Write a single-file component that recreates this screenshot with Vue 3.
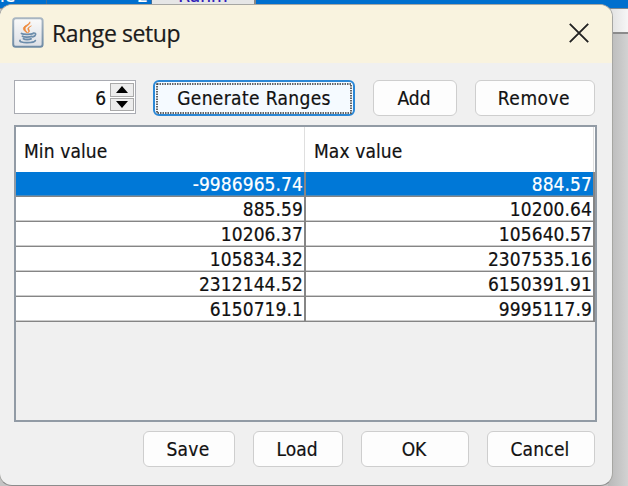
<script setup>
import { ref } from 'vue'

const count = ref(6)
const selected = ref(0)
const rows = [
  ['-9986965.74', '884.57'],
  ['885.59', '10200.64'],
  ['10206.37', '105640.57'],
  ['105834.32', '2307535.16'],
  ['2312144.52', '6150391.91'],
  ['6150719.1', '9995117.9'],
]
</script>

<template>
  <div class="desktop">
    <div class="backdrop">
      <div class="back-cell first"><span>le</span></div>
      <div class="back-cell second"><span>2</span></div>
      <div class="back-button"><span>Rahm</span></div>
    </div>
    <div class="side"><div class="side-head"></div></div>

    <section class="dialog">
      <header class="titlebar">
        <svg class="java" width="32" height="32" viewBox="0 0 32 32">
          <defs>
            <linearGradient id="tile" x1="0" y1="0" x2="0" y2="1">
              <stop offset="0" stop-color="#fafafa" />
              <stop offset="1" stop-color="#dcdfe5" />
            </linearGradient>
            <linearGradient id="edge" x1="0" y1="0" x2="0" y2="1">
              <stop offset="0" stop-color="#a9b6c2" />
              <stop offset="1" stop-color="#6f8ba5" />
            </linearGradient>
          </defs>
          <rect x="1.2" y="1.2" width="29.4" height="28.6" rx="2.5" fill="url(#tile)" stroke="url(#edge)" stroke-width="2" />
          <path d="M17.800 4.800c1.400 3-5 4.300-4.700 7.200.1 1.600 1.700 2.700 2.500 4-2.500-1.200-4.600-2.700-4.200-4.900.5-2.700 6.200-3.500 6.400-6.300z" fill="#ee8a3c" stroke="#ee8a3c" stroke-width=".7" />
          <path d="M19.500 8.800c-2.100 1-4 1.700-3.800 3.200.1 1.300 1.500 1.900.5 3.800 2-1.200 1.500-2.400.8-3.400-.9-1.300.6-2.400 2.500-3.600z" fill="#ee8a3c" stroke="#ee8a3c" stroke-width=".5" />
          <g fill="none" stroke="#6b8cab" stroke-linecap="round">
            <path d="M9.500 16.500c1.500 1 9 1.200 11.500.2" stroke-width="1.800" />
            <path d="M10.500 19.300c1.500 1.100 7 1.100 9.400.1M11.500 21.700c1.500 1 5.500 1 7.500.1" stroke-width="1.900" />
            <path d="M21.500 16c3.400-.4 2.500 3.200-.8 3.900" stroke-width="1.600" />
            <path d="M8 23.400c-1.500 2.800 14 3 15.300.2" stroke-width="1.800" />
          </g>
        </svg>
        <h1>Range setup</h1>
        <svg class="close" width="20" height="20" viewBox="0 0 20 20">
          <path d="M.8.800 19.200 19.200M19.200.800.800 19.200" fill="none" stroke="#222" stroke-width="1.900" />
        </svg>
      </header>

      <div class="toolbar">
        <div class="spinner">
          <span class="num">{{ count }}</span>
          <div class="steps">
            <button @click="count++"><svg width="12" height="7" viewBox="0 0 12 7"><path d="M0 7 6 0 12 7z" /></svg></button>
            <button @click="count--"><svg width="12" height="7" viewBox="0 0 12 7"><path d="M0 0 6 7 12 0z" /></svg></button>
          </div>
        </div>
        <button class="btn generate">
          <svg class="focus" width="196" height="31"><rect x="1" y="1" width="194" height="29" /></svg>
          <span>Generate Ranges</span>
        </button>
        <button class="btn add"><span>Add</span></button>
        <button class="btn remove"><span>Remove</span></button>
      </div>

      <div class="table">
        <div class="thead">
          <div class="th"><span>Min value</span></div>
          <div class="th"><span>Max value</span></div>
        </div>
        <div
          v-for="(row, i) in rows"
          :key="i"
          class="tr"
          :class="{ selected: i === selected }"
          @click="selected = i"
        >
          <div class="td"><span>{{ row[0] }}</span></div>
          <div class="td"><span>{{ row[1] }}</span></div>
        </div>
      </div>

      <footer class="actions">
        <button class="btn save"><span>Save</span></button>
        <button class="btn load"><span>Load</span></button>
        <button class="btn ok"><span>OK</span></button>
        <button class="btn cancel"><span>Cancel</span></button>
      </footer>
    </section>
  </div>
</template>

<style>
body {
  overflow: hidden;
}
</style>

<style scoped>
* {
  box-sizing: border-box;
}
.desktop {
  position: relative;
  width: 628px;
  height: 486px;
  overflow: hidden;
  background: #c4c4c4;
  font-family: "DejaVu Sans Condensed", "DejaVu Sans", sans-serif;
  font-stretch: condensed;
  font-size: 19px;
  color: #111;
  -webkit-text-stroke: 0.2px currentColor;
}
.backdrop {
  display: flex;
  height: 9px;
  overflow: hidden;
  background: #006fce;
  border-bottom: 1px solid #7c8791;
}
.back-cell {
  display: flex;
  align-items: flex-end;
  height: 4px;
  line-height: 19px;
  color: #fff;
  border-right: 1px solid #3f6f9c;
}
.first {
  width: 47px;
}
.second {
  width: 105px;
  justify-content: flex-end;
  padding-right: 3px;
}
.back-cell span,
.back-button span {
  margin-bottom: -1px;
}
.back-button {
  display: flex;
  align-items: flex-end;
  justify-content: center;
  width: 104px;
  height: 4px;
  line-height: 20px;
  color: #2a18b8;
  background: #e6e6e6;
  border-right: 2px solid #888;
}
.side {
  width: 20px;
  height: 477px;
  margin-left: auto;
  background: linear-gradient(90deg, #b8b8b8, #d2d2d2);
}
.side-head {
  height: 25px;
  background: linear-gradient(90deg, #dedede, #f6f6f6);
  border-bottom: 2px solid #8b8b8b;
}
.dialog {
  position: absolute;
  left: -1px;
  top: 4px;
  width: 614px;
  height: 482px;
  overflow: hidden;
  background: #f0f0f0;
  border: 1px solid #a6a6a2;
  border-bottom-color: #8c8c8c;
  border-radius: 13px;
}
.titlebar {
  display: flex;
  align-items: flex-start;
  height: 58px;
  padding: 12px 23px 0 12px;
  background: #f9f3df;
}
h1 {
  flex: 1;
  margin: 1px 0 0 8px;
  font: 400 23px/30px "Open Sans", sans-serif;
  letter-spacing: -0.42px;
  color: #1b1b1b;
}
.close {
  margin-top: 6px;
}
.toolbar {
  display: flex;
  align-items: flex-start;
  height: 62px;
  padding: 17px 0 0 14px;
}
.spinner {
  display: flex;
  justify-content: flex-end;
  width: 122px;
  height: 34px;
  padding: 2px 1px;
  background: #fff;
  border: 1.500px solid #a9abb2;
}
.num {
  padding-right: 4px;
  line-height: 30px;
}
.steps {
  display: flex;
  flex-direction: column;
  gap: 1px;
  width: 24px;
}
.steps button {
  display: flex;
  flex: 1;
  align-items: center;
  justify-content: center;
  padding: 0;
  background: #ededed;
  border: 1px solid #a9a9a9;
}
.btn {
  display: flex;
  align-items: center;
  justify-content: center;
  height: 36px;
  padding: 0 2px 0 0;
  font: inherit;
  color: inherit;
  white-space: nowrap;
  background: #fdfdfd;
  border: 1px solid #cecece;
  border-radius: 6px;
}
.generate {
  position: relative;
  width: 202px;
  margin-left: 17px;
  padding-right: 0;
  letter-spacing: 0.36px;
  background: #f5faff;
  border: 2px solid #2a87d6;
}
.focus {
  position: absolute;
  left: 1px;
  top: 1px;
}
.focus rect {
  fill: none;
  stroke: #333;
  stroke-width: 1.500;
  stroke-dasharray: 1.500 1;
}
.add {
  width: 84px;
  margin-left: 18px;
}
.remove {
  width: 120px;
  margin-left: 18px;
  letter-spacing: 0.5px;
}
.table {
  width: 583px;
  height: 297px;
  margin-left: 14px;
  background: #f0f0f0;
  border: 2px solid #929ba5;
}
.thead {
  display: flex;
  height: 45px;
  background: #fff;
}
.th {
  width: 289px;
  padding-left: 8px;
  line-height: 49px;
  letter-spacing: 0.1px;
  border-right: 1px solid #dfdfdf;
}
.th + .th {
  width: 289px;
  padding-left: 9px;
}
.tr {
  display: flex;
  height: 25px;
  background: #fff;
  border-bottom: 1.500px solid #858585;
  box-shadow: inset 0 -0.5px #999;
}
.tr.selected {
  color: #fff;
  background: #0078d7;
}
.td {
  width: 290px;
  padding-right: 1px;
  line-height: 24px;
  letter-spacing: 0.08px;
  text-align: right;
  border-right: 2px solid #858585;
}
.td + .td {
  width: 289px;
  padding-right: 1px;
}
.actions {
  display: flex;
  justify-content: flex-end;
  padding: 9px 17px 0 0;
}
.save {
  width: 92px;
  letter-spacing: 0.3px;
}
.load {
  width: 90px;
  margin-left: 18px;
}
.ok {
  width: 108px;
  margin-left: 18px;
}
.cancel {
  width: 108px;
  margin-left: 18px;
  letter-spacing: 0.2px;
}
</style>
